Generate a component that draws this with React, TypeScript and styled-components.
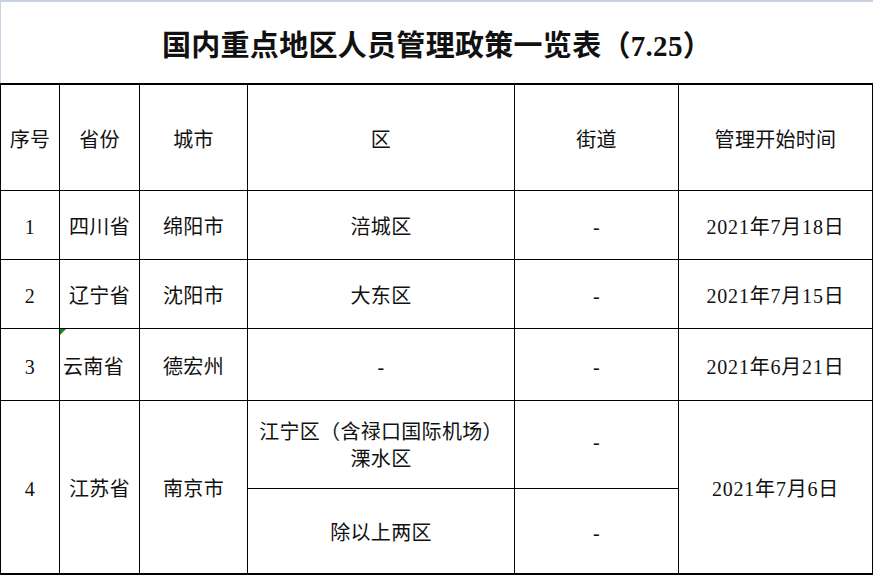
import React from "react";
import styled, { createGlobalStyle } from "styled-components";

const Global = createGlobalStyle`
  html, body { margin: 0; padding: 0; background: #ffffff; }
  body { width: 873px; height: 577px; overflow: hidden; }
`;

const Sheet = styled.div`
  width: 873px;
  height: 577px;
  background: #ffffff;
  font-family: "Liberation Serif", "Noto Sans CJK SC", serif;
  color: #111111;
`;

const TitleBar = styled.div`
  box-sizing: border-box;
  height: 83px;
  border-top: 2px solid #c9d1e4;
  border-left: 1px solid #c9d1e4;
  display: flex;
  align-items: center;
  justify-content: center;
`;

const Title = styled.h1`
  margin: 0;
  font-size: 29px;
  font-weight: 700;
  letter-spacing: 0.3px;
  font-family: "Liberation Serif", "Noto Sans CJK SC", serif;
  color: #111111;
`;

const Grid = styled.div`
  display: grid;
  grid-template-columns: 59px 80px 108px 267px 164px 194px;
  grid-template-rows: 106px 69px 69px 72px 88px 86px;
  border-top: 2px solid #000;
  border-left: 1px solid #000;
  width: 873px;
  box-sizing: border-box;
`;

const Cell = styled.div<{
  $rows?: number;
  $last?: boolean;
  $shift?: number;
  $lift?: number;
  $mark?: boolean;
  $spacing?: number;
}>`
  box-sizing: border-box;
  position: relative;
  grid-row: span ${(p) => p.$rows ?? 1};
  border-right: 1px solid #000;
  border-bottom: ${(p) => (p.$last ? "2px" : "1px")} solid #000;
  display: flex;
  align-items: center;
  justify-content: center;
  text-align: center;
  font-size: 20px;
  line-height: 27px;
  letter-spacing: ${(p) => p.$spacing ?? 0.3}px;
  padding-right: ${(p) => p.$shift ?? 0}px;
  padding-top: 5px;
  padding-bottom: ${(p) => p.$lift ?? 0}px;
  ${(p) =>
    p.$mark
      ? `&::before {
          content: "";
          position: absolute;
          top: 0;
          left: 0;
          border-top: 6px solid #178a17;
          border-right: 6px solid transparent;
        }`
      : ""}
`;

const Lines = styled.div`
  display: flex;
  flex-direction: column;
  align-items: center;
  margin-top: -2px;
`;

const headers = ["序号", "省份", "城市", "区", "街道", "管理开始时间"];

type Row = { n: string; prov: string; city: string; dist: string; date: string; shift?: number; mark?: boolean };

const rows: Row[] = [
  { n: "1", prov: "四川省", city: "绵阳市", dist: "涪城区", date: "2021年7月18日" },
  { n: "2", prov: "辽宁省", city: "沈阳市", dist: "大东区", date: "2021年7月15日" },
  { n: "3", prov: "云南省", city: "德宏州", dist: "-", date: "2021年6月21日", shift: 12, mark: true },
];

export default function App() {
  return (
    <Sheet>
      <Global />
      <TitleBar>
        <Title>国内重点地区人员管理政策一览表（7.25）</Title>
      </TitleBar>
      <Grid>
        {headers.map((h) => (
          <Cell key={h}>{h}</Cell>
        ))}
        {rows.map((r) => (
          <React.Fragment key={r.n}>
            <Cell>{r.n}</Cell>
            <Cell $shift={r.shift} $mark={r.mark}>{r.prov}</Cell>
            <Cell>{r.city}</Cell>
            <Cell>{r.dist}</Cell>
            <Cell>-</Cell>
            <Cell $spacing={0.8}>{r.date}</Cell>
          </React.Fragment>
        ))}
        <Cell $rows={2} $last>4</Cell>
        <Cell $rows={2} $last>江苏省</Cell>
        <Cell $rows={2} $last>南京市</Cell>
        <Cell>
          <Lines>
            <span>江宁区（含禄口国际机场）</span>
            <span>溧水区</span>
          </Lines>
        </Cell>
        <Cell $lift={10}>-</Cell>
        <Cell $rows={2} $last $spacing={0.8}>2021年7月6日</Cell>
        <Cell $last>除以上两区</Cell>
        <Cell $last>-</Cell>
      </Grid>
    </Sheet>
  );
}
